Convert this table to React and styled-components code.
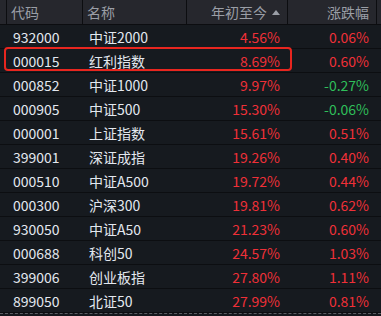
import React from "react";
import styled, { createGlobalStyle } from "styled-components";

const GlobalStyle = createGlobalStyle`
  html, body {
    margin: 0;
    padding: 0;
    background: #15181d;
  }
  body {
    font-family: "Noto Sans CJK SC", "Noto Sans", sans-serif;
  }
`;

const rows = [
  ["932000", "中证2000", "4.56%", "0.06%"],
  ["000015", "红利指数", "8.69%", "0.60%"],
  ["000852", "中证1000", "9.97%", "-0.27%"],
  ["000905", "中证500", "15.30%", "-0.06%"],
  ["000001", "上证指数", "15.61%", "0.51%"],
  ["399001", "深证成指", "19.26%", "0.40%"],
  ["000510", "中证A500", "19.72%", "0.44%"],
  ["000300", "沪深300", "19.81%", "0.62%"],
  ["930050", "中证A50", "21.23%", "0.60%"],
  ["000688", "科创50", "24.57%", "1.03%"],
  ["399006", "创业板指", "27.80%", "1.11%"],
  ["899050", "北证50", "27.99%", "0.81%"],
];

const COLS = "7px 76px 104px 101px 89px 1fr";

const Table = styled.div`
  position: relative;
  width: 381px;
  height: 316px;
  overflow: hidden;
  background: #15181d;
  font-size: 14px;
`;

const HeaderRow = styled.div`
  display: grid;
  grid-template-columns: ${COLS};
  height: 24px;
  background: #26272d;
  border-bottom: 1px solid #0c0d10;
  color: #9a9ea6;
`;

const HeadCell = styled.div`
  display: flex;
  align-items: center;
  justify-content: ${(p) => (p.$right ? "flex-end" : "flex-start")};
  padding: 0 ${(p) => (p.$right ? "7px" : "0")} 0 ${(p) => (p.$right ? "0" : "4px")};
  border-right: ${(p) => (p.$last ? "none" : "1px solid #0c0d10")};
  line-height: 24px;
`;

const SortArrow = styled.span`
  width: 0;
  height: 0;
  margin-left: 5px;
  border-left: 4px solid transparent;
  border-right: 4px solid transparent;
  border-bottom: 5px solid #9a9ea6;
`;

const Row = styled.div`
  display: grid;
  grid-template-columns: ${COLS};
  height: 23px;
  border-bottom: 1px solid #0c0e11;
  background: #161a1f;
`;

const Cell = styled.div`
  display: flex;
  align-items: center;
  justify-content: ${(p) => (p.$right ? "flex-end" : "flex-start")};
  padding-left: ${(p) => (p.$right ? "0" : "6px")};
  padding-right: ${(p) => (p.$right ? "8px" : "0")};
  color: ${(p) => p.$color || "#e3e8ef"};
  white-space: nowrap;
`;

const Highlight = styled.div`
  position: absolute;
  left: 4px;
  top: 47px;
  width: 284px;
  height: 20px;
  border: 2px solid #e8261f;
  border-radius: 4px;
  pointer-events: none;
`;

const Dashed = styled.div`
  position: absolute;
  left: 0;
  right: 0;
  top: 313px;
  border-top: 1px dashed #5a5d63;
`;

const RED = "#ef3038";
const GREEN = "#2fbf5a";

export default function App() {
  return (
    <>
      <GlobalStyle />
      <Table>
        <HeaderRow>
          <HeadCell />
          <HeadCell>代码</HeadCell>
          <HeadCell>名称</HeadCell>
          <HeadCell $right>
            年初至今
            <SortArrow />
          </HeadCell>
          <HeadCell $right>涨跌幅</HeadCell>
          <HeadCell $last />
        </HeaderRow>
        {rows.map(([code, name, ytd, chg]) => (
          <Row key={code}>
            <Cell />
            <Cell>{code}</Cell>
            <Cell>{name}</Cell>
            <Cell $right $color={RED}>
              {ytd}
            </Cell>
            <Cell $right $color={chg.startsWith("-") ? GREEN : RED}>
              {chg}
            </Cell>
            <Cell />
          </Row>
        ))}
        <Highlight />
        <Dashed />
      </Table>
    </>
  );
}
